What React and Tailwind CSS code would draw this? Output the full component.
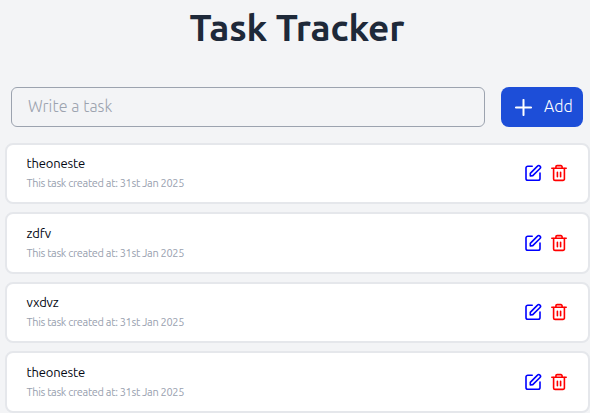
const tasks = ['theoneste', 'zdfv', 'vxdvz', 'theoneste'];

function PlusIcon() {
  return (
    <svg width="17" height="17" viewBox="0 0 17 17" fill="none" stroke="currentColor" strokeWidth="2" strokeLinecap="round">
      <path d="M8.5 .9v15.2M.9 8.5h15.2" />
    </svg>
  );
}

function EditIcon() {
  return (
    <svg width="18" height="18" viewBox="0 0 18 18" fill="none" stroke="#0000ff" strokeWidth="1.6" strokeLinecap="round" strokeLinejoin="round">
      <path d="M8.2 2.2H3.8A1.8 1.8 0 0 0 2 4v10.4a1.8 1.8 0 0 0 1.8 1.8h10.4a1.8 1.8 0 0 0 1.8-1.8V9" />
      <path d="M6.3 11.9v-2.5l7.2-7.3a1.7 1.7 0 0 1 2.5 0a1.7 1.7 0 0 1 0 2.4l-7.2 7.1z" />
    </svg>
  );
}

function TrashIcon() {
  return (
    <svg width="18" height="18" viewBox="0 0 18 18" fill="none" stroke="#ff0000" strokeWidth="1.6" strokeLinecap="round" strokeLinejoin="round">
      <path d="M1.8 4.3h14.4" />
      <path d="M5.9 4.1V2.8a1.2 1.2 0 0 1 1.2-1.2h3.8a1.2 1.2 0 0 1 1.2 1.2v1.3" />
      <path d="M3.6 4.5v10.4a1.5 1.5 0 0 0 1.5 1.5h7.8a1.5 1.5 0 0 0 1.5-1.5V4.5M7.4 8.2v4.6M10.6 8.2v4.6" />
    </svg>
  );
}

function TaskCard({ title }) {
  return (
    <li className="flex h-[61.5px] items-center justify-between rounded-lg border-2 border-gray-200 bg-white pr-[20px] pl-[19.5px]">
      <div>
        <p className="text-[13px] leading-5 tracking-[-0.15px] text-gray-950">{title}</p>
        <p className="text-[11px] leading-5 tracking-[-0.34px] text-gray-400">This task created at: 31st Jan 2025</p>
      </div>
      <div className="flex gap-2">
        <button aria-label="Edit task"><EditIcon /></button>
        <button aria-label="Delete task"><TrashIcon /></button>
      </div>
    </li>
  );
}

export default function App() {
  return (
    <main className="h-[413px] overflow-hidden bg-[#f3f4f6] pl-[5px] font-['Ubuntu','Noto_Sans',sans-serif]">
      <h1 className="h-[87px] pt-[8px] pr-[1px] text-center text-[37px] leading-10 font-bold tracking-[-0.1px] text-gray-800">Task Tracker</h1>
      <form className="flex h-10 gap-4 pr-[7px] pl-[6px]">
        <input
          aria-label="Write a task"
          placeholder="Write a task"
          className="min-w-0 flex-1 rounded-md border border-[#9ca3af] bg-transparent px-4 pb-[2px] text-base font-light tracking-[0.08px] placeholder:text-[#9ca3af]"
        />
        <button type="button" className="flex w-[82px] items-center gap-3 rounded-lg bg-[#1d4ed8] pl-[14px] text-base font-light text-white">
          <PlusIcon />
          <span className="pb-[2px]">Add</span>
        </button>
      </form>
      <ul className="mt-[15.5px] flex flex-col gap-2">
        {tasks.map((title, index) => <TaskCard key={index} title={title} />)}
      </ul>
    </main>
  );
}
